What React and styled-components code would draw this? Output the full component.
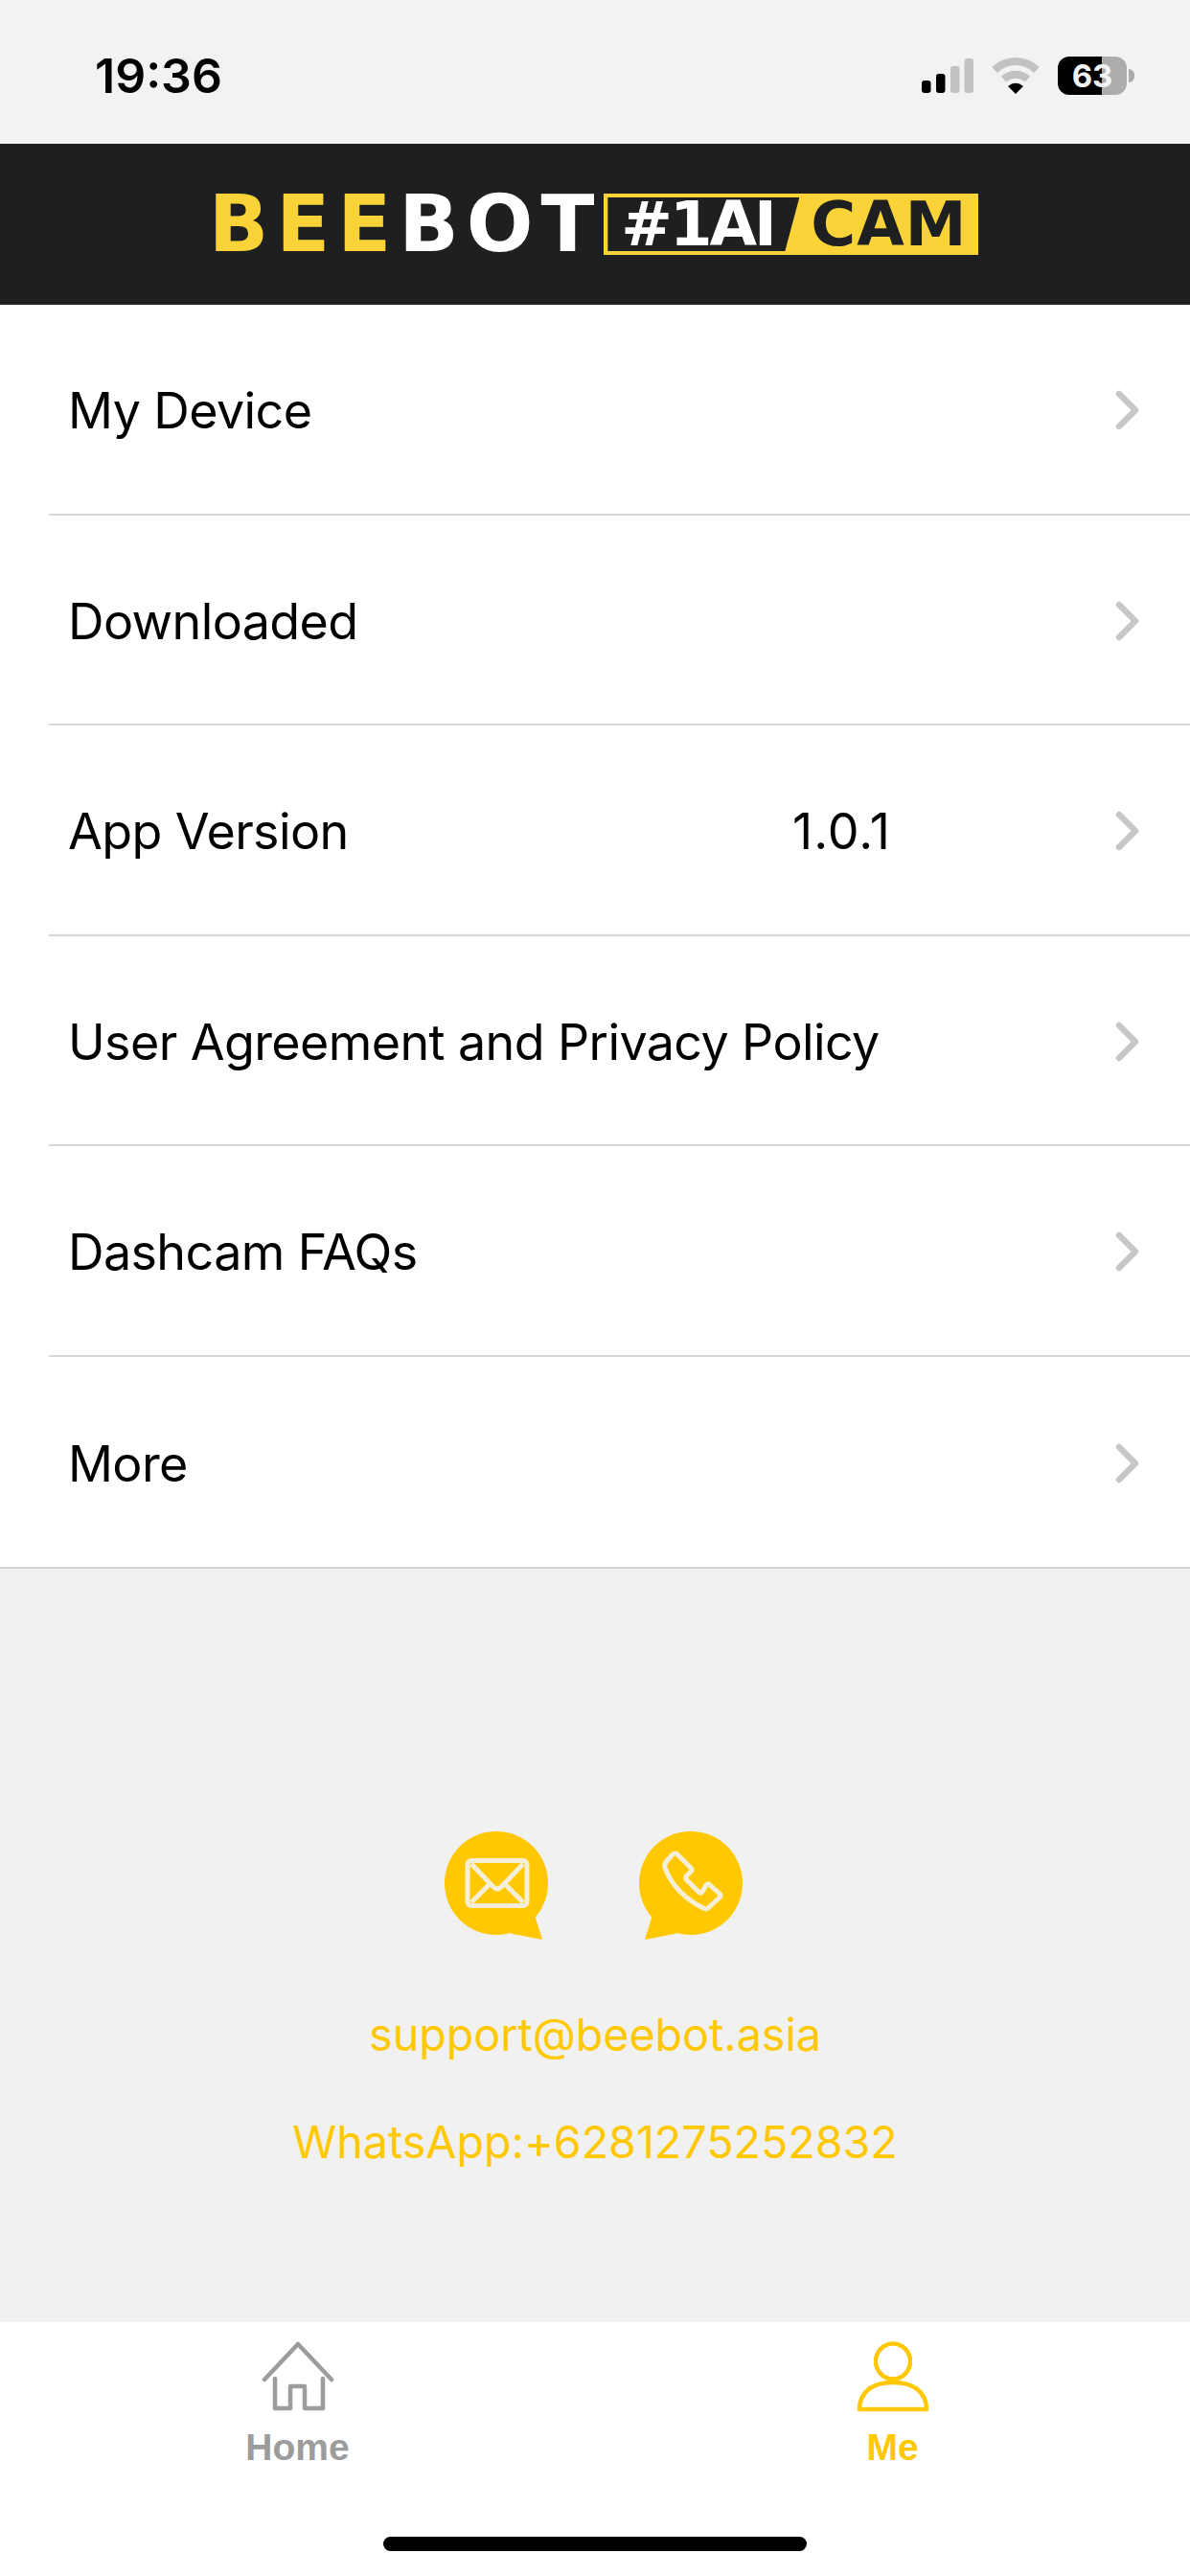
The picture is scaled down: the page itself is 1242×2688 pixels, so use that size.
import React from "react";
import styled, { createGlobalStyle } from "styled-components";

const GlobalStyle = createGlobalStyle`
  html, body {
    margin: 0;
    padding: 0;
    background: #f1f1f1;
  }
  * {
    box-sizing: border-box;
  }
`;

const YELLOW = "#ffc800";
const LOGO_YELLOW = "#fad339";
const DARK = "#1e1f21";

const Page = styled.div`
  width: 1242px;
  height: 2688px;
  display: flex;
  flex-direction: column;
  background: #f1f1f1;
  font-family: Inter, "Liberation Sans", sans-serif;
  color: #000;
`;

const StatusBar = styled.div`
  height: 150px;
  flex-shrink: 0;
  display: flex;
  align-items: center;
  justify-content: space-between;
  padding: 0 58px 0 99px;
  background: #f2f2f2;
`;

const Time = styled.div`
  font-size: 50px;
  font-weight: 600;
  line-height: 1;
  margin-top: 8px;
`;

const StatusIcons = styled.div`
  display: flex;
  align-items: center;
  gap: 18px;
  margin-top: 8px;
`;

const Battery = styled.div`
  position: relative;
  width: 72px;
  height: 40px;
  border-radius: 12px;
  overflow: hidden;
  background: linear-gradient(90deg, #000 0 64%, #acacac 64% 100%);
  color: #f2f2f2;
  font-size: 33px;
  font-weight: 700;
  display: flex;
  align-items: center;
  justify-content: center;
`;

const BatteryWrap = styled.div`
  display: flex;
  align-items: center;
  gap: 2px;
`;

const BatteryTip = styled.div`
  width: 6px;
  height: 14px;
  border-radius: 0 7px 7px 0;
  background: #acacac;
`;

const Header = styled.header`
  height: 168px;
  flex-shrink: 0;
  display: flex;
  align-items: center;
  justify-content: center;
  gap: 2px;
  padding-right: 3px;
  background: ${DARK};
`;

const Wordmark = styled.div`
  display: flex;
  font-family: "DejaVu Sans", sans-serif;
  font-size: 82px;
  font-weight: 700;
  line-height: 64px;
  height: 64px;
  letter-spacing: 8px;
`;

const WordPart = styled.span`
  color: ${(p) => p.$color};
`;

const Badge = styled.div`
  width: 391px;
  height: 64px;
  display: flex;
  align-items: stretch;
  padding: 4px;
  background: ${LOGO_YELLOW};
`;

const BadgeDark = styled.div`
  width: 200px;
  margin-right: 12px;
  display: flex;
  align-items: center;
  padding-left: 14px;
  background: ${DARK};
  clip-path: polygon(0 0, 100% 0, 92.5% 100%, 0 100%);
  color: #fff;
  font-family: "DejaVu Sans", sans-serif;
  font-size: 64px;
  font-weight: 700;
  letter-spacing: -3px;
`;

const BadgeCam = styled.div`
  flex: 1;
  display: flex;
  align-items: center;
  color: ${DARK};
  font-family: "DejaVu Sans", sans-serif;
  font-size: 64px;
  font-weight: 700;
  letter-spacing: 1px;
`;

const List = styled.div`
  flex-shrink: 0;
  background: #fff;
  border-bottom: 2px solid #d6d6d6;
`;

const Row = styled.div`
  height: 219.5px;
  margin-left: 51px;
  padding: 3px 52px 0 20px;
  display: flex;
  align-items: center;
  border-bottom: ${(p) => (p.$last ? "none" : "2px solid #d6d6d6")};
`;

const RowLabel = styled.div`
  flex: 1;
  margin-top: 2px;
  font-size: 52px;
  line-height: 1;
  letter-spacing: -0.6px;
`;

const RowValue = styled.div`
  margin: 2px 234px 0 0;
  font-size: 52px;
  line-height: 1;
  letter-spacing: 1px;
`;

const Contact = styled.div`
  flex: 1;
  display: flex;
  flex-direction: column;
  align-items: center;
  padding-top: 268px;
`;

const ContactIcons = styled.div`
  display: flex;
  gap: 83px;
  margin-left: -3px;
`;

const ContactText = styled.div`
  color: ${YELLOW};
  font-size: 46.6px;
  font-weight: 400;
  line-height: 56px;
  margin-top: ${(p) => p.$top}px;
`;

const TabBar = styled.nav`
  height: 265px;
  flex-shrink: 0;
  background: #fff;
  display: flex;
  flex-direction: column;
  align-items: center;
`;

const Tabs = styled.div`
  width: 100%;
  display: grid;
  grid-template-columns: 1fr 1fr;
`;

const Tab = styled.div`
  display: flex;
  flex-direction: column;
  align-items: center;
  padding-top: 20px;
  color: ${(p) => p.$color};
  font-family: "Liberation Sans", sans-serif;
  font-size: 39px;
  font-weight: 700;
  line-height: 44px;
`;

const TabLabel = styled.div`
  margin-top: 15px;
`;

const HomeIndicator = styled.div`
  width: 442px;
  height: 15px;
  margin-top: 71px;
  border-radius: 8px;
  background: #000;
`;

const SignalIcon = () => (
  <svg width="54" height="36" viewBox="0 0 54 36">
    <rect x="0" y="23" width="9.5" height="13" rx="3" fill="#000" />
    <rect x="15" y="16" width="9.5" height="20" rx="3" fill="#000" />
    <rect x="30" y="8" width="9.5" height="28" rx="3" fill="#c2c2c2" />
    <rect x="44.5" y="0" width="9.5" height="36" rx="3" fill="#c2c2c2" />
  </svg>
);

const WifiIcon = () => (
  <svg width="52" height="40" viewBox="0 0 52 40">
    <path d="M4 14 C17 2 35 2 48 14" fill="none" stroke="#c2c2c2" strokeWidth="8" />
    <path d="M13.5 23.5 C21 17 31 17 38.5 23.5" fill="none" stroke="#c2c2c2" strokeWidth="8" />
    <path d="M18 31 C23 26.5 29 26.5 34 31 L26 39 Z" fill="#000" />
  </svg>
);

const Chevron = () => (
  <svg width="26" height="42" viewBox="0 0 26 42">
    <path d="M4 4 L21 21 L4 38" fill="none" stroke="#c7c7c7" strokeWidth="6.5" strokeLinecap="round" strokeLinejoin="round" />
  </svg>
);

const MailBubble = () => (
  <svg width="120" height="122" viewBox="0 0 120 122">
    <circle cx="60" cy="60" r="54" fill={YELLOW} />
    <path d="M92 90 L100 96 L107 118 L76 112 Z" fill={YELLOW} stroke={YELLOW} strokeWidth="1.5" strokeLinejoin="round" />
    <g fill="none" stroke="#f6efd8" strokeWidth="5" strokeLinejoin="round">
      <rect x="30" y="36.5" width="62" height="47" rx="4" />
      <path d="M34 40 L57 64 Q61 68 65 64 L88 40" />
      <path d="M34 80 L53 61 M88 80 L69 61" />
    </g>
  </svg>
);

const PhoneBubble = () => (
  <svg width="120" height="122" viewBox="0 0 120 122">
    <circle cx="60" cy="60" r="54" fill={YELLOW} />
    <path d="M28 90 L20 96 L13 118 L44 112 Z" fill={YELLOW} stroke={YELLOW} strokeWidth="1.5" strokeLinejoin="round" />
    <path
      d="M41 30 Q44 28 46 30 L60 44 Q62 46 60 48 L55 53 Q54 55 56 57 L68 69 Q70 71 72 69 L76 62 Q78 60 80 62 L90 71 Q92 73 90 75 L78 86 Q76 88 73 86 Q60 80 48 68 Q37 56 33 44 Q32 41 34 38 Z"
      fill="none"
      stroke="#f6efd8"
      strokeWidth="5"
      strokeLinejoin="round"
    />
  </svg>
);

const HomeIcon = () => (
  <svg width="76" height="74" viewBox="0 0 76 74">
    <g fill="none" stroke="#9c9c9c" strokeWidth="4.5" strokeLinecap="round" strokeLinejoin="round">
      <path d="M3 40 L38 3 L73 40" />
      <path d="M14 39 V70 H30 V47 H45 V70 H64 V39" />
    </g>
  </svg>
);

const MeIcon = () => (
  <svg width="76" height="74" viewBox="0 0 76 74">
    <g fill="none" stroke={YELLOW} strokeWidth="4.5" strokeLinejoin="round">
      <ellipse cx="38" cy="21" rx="18" ry="18.5" />
      <path d="M3 71 C3 52 18 43 38 43 C58 43 73 52 73 71 Z" />
    </g>
  </svg>
);

const rows = [
  { label: "My Device" },
  { label: "Downloaded" },
  { label: "App Version", value: "1.0.1" },
  { label: "User Agreement and Privacy Policy" },
  { label: "Dashcam FAQs" },
  { label: "More", last: true },
];

const App = () => {
  return (
    <>
      <GlobalStyle />
      <Page>
        <StatusBar>
          <Time>19:36</Time>
          <StatusIcons>
            <SignalIcon />
            <WifiIcon />
            <BatteryWrap>
              <Battery>63</Battery>
              <BatteryTip />
            </BatteryWrap>
          </StatusIcons>
        </StatusBar>

        <Header>
          <Wordmark>
            <WordPart $color={LOGO_YELLOW}>BEE</WordPart>
            <WordPart $color="#fff">BOT</WordPart>
          </Wordmark>
          <Badge>
            <BadgeDark>#1AI</BadgeDark>
            <BadgeCam>CAM</BadgeCam>
          </Badge>
        </Header>

        <List>
          {rows.map((row) => (
            <Row key={row.label} $last={row.last}>
              <RowLabel>{row.label}</RowLabel>
              {row.value && <RowValue>{row.value}</RowValue>}
              <Chevron />
            </Row>
          ))}
        </List>

        <Contact>
          <ContactIcons>
            <MailBubble />
            <PhoneBubble />
          </ContactIcons>
          <ContactText $top={68}>support@beebot.asia</ContactText>
          <ContactText $top={56}>WhatsApp:+6281275252832</ContactText>
        </Contact>

        <TabBar>
          <Tabs>
            <Tab $color="#9c9c9c">
              <HomeIcon />
              <TabLabel>Home</TabLabel>
            </Tab>
            <Tab $color={YELLOW}>
              <MeIcon />
              <TabLabel>Me</TabLabel>
            </Tab>
          </Tabs>
          <HomeIndicator />
        </TabBar>
      </Page>
    </>
  );
};

export default App;
